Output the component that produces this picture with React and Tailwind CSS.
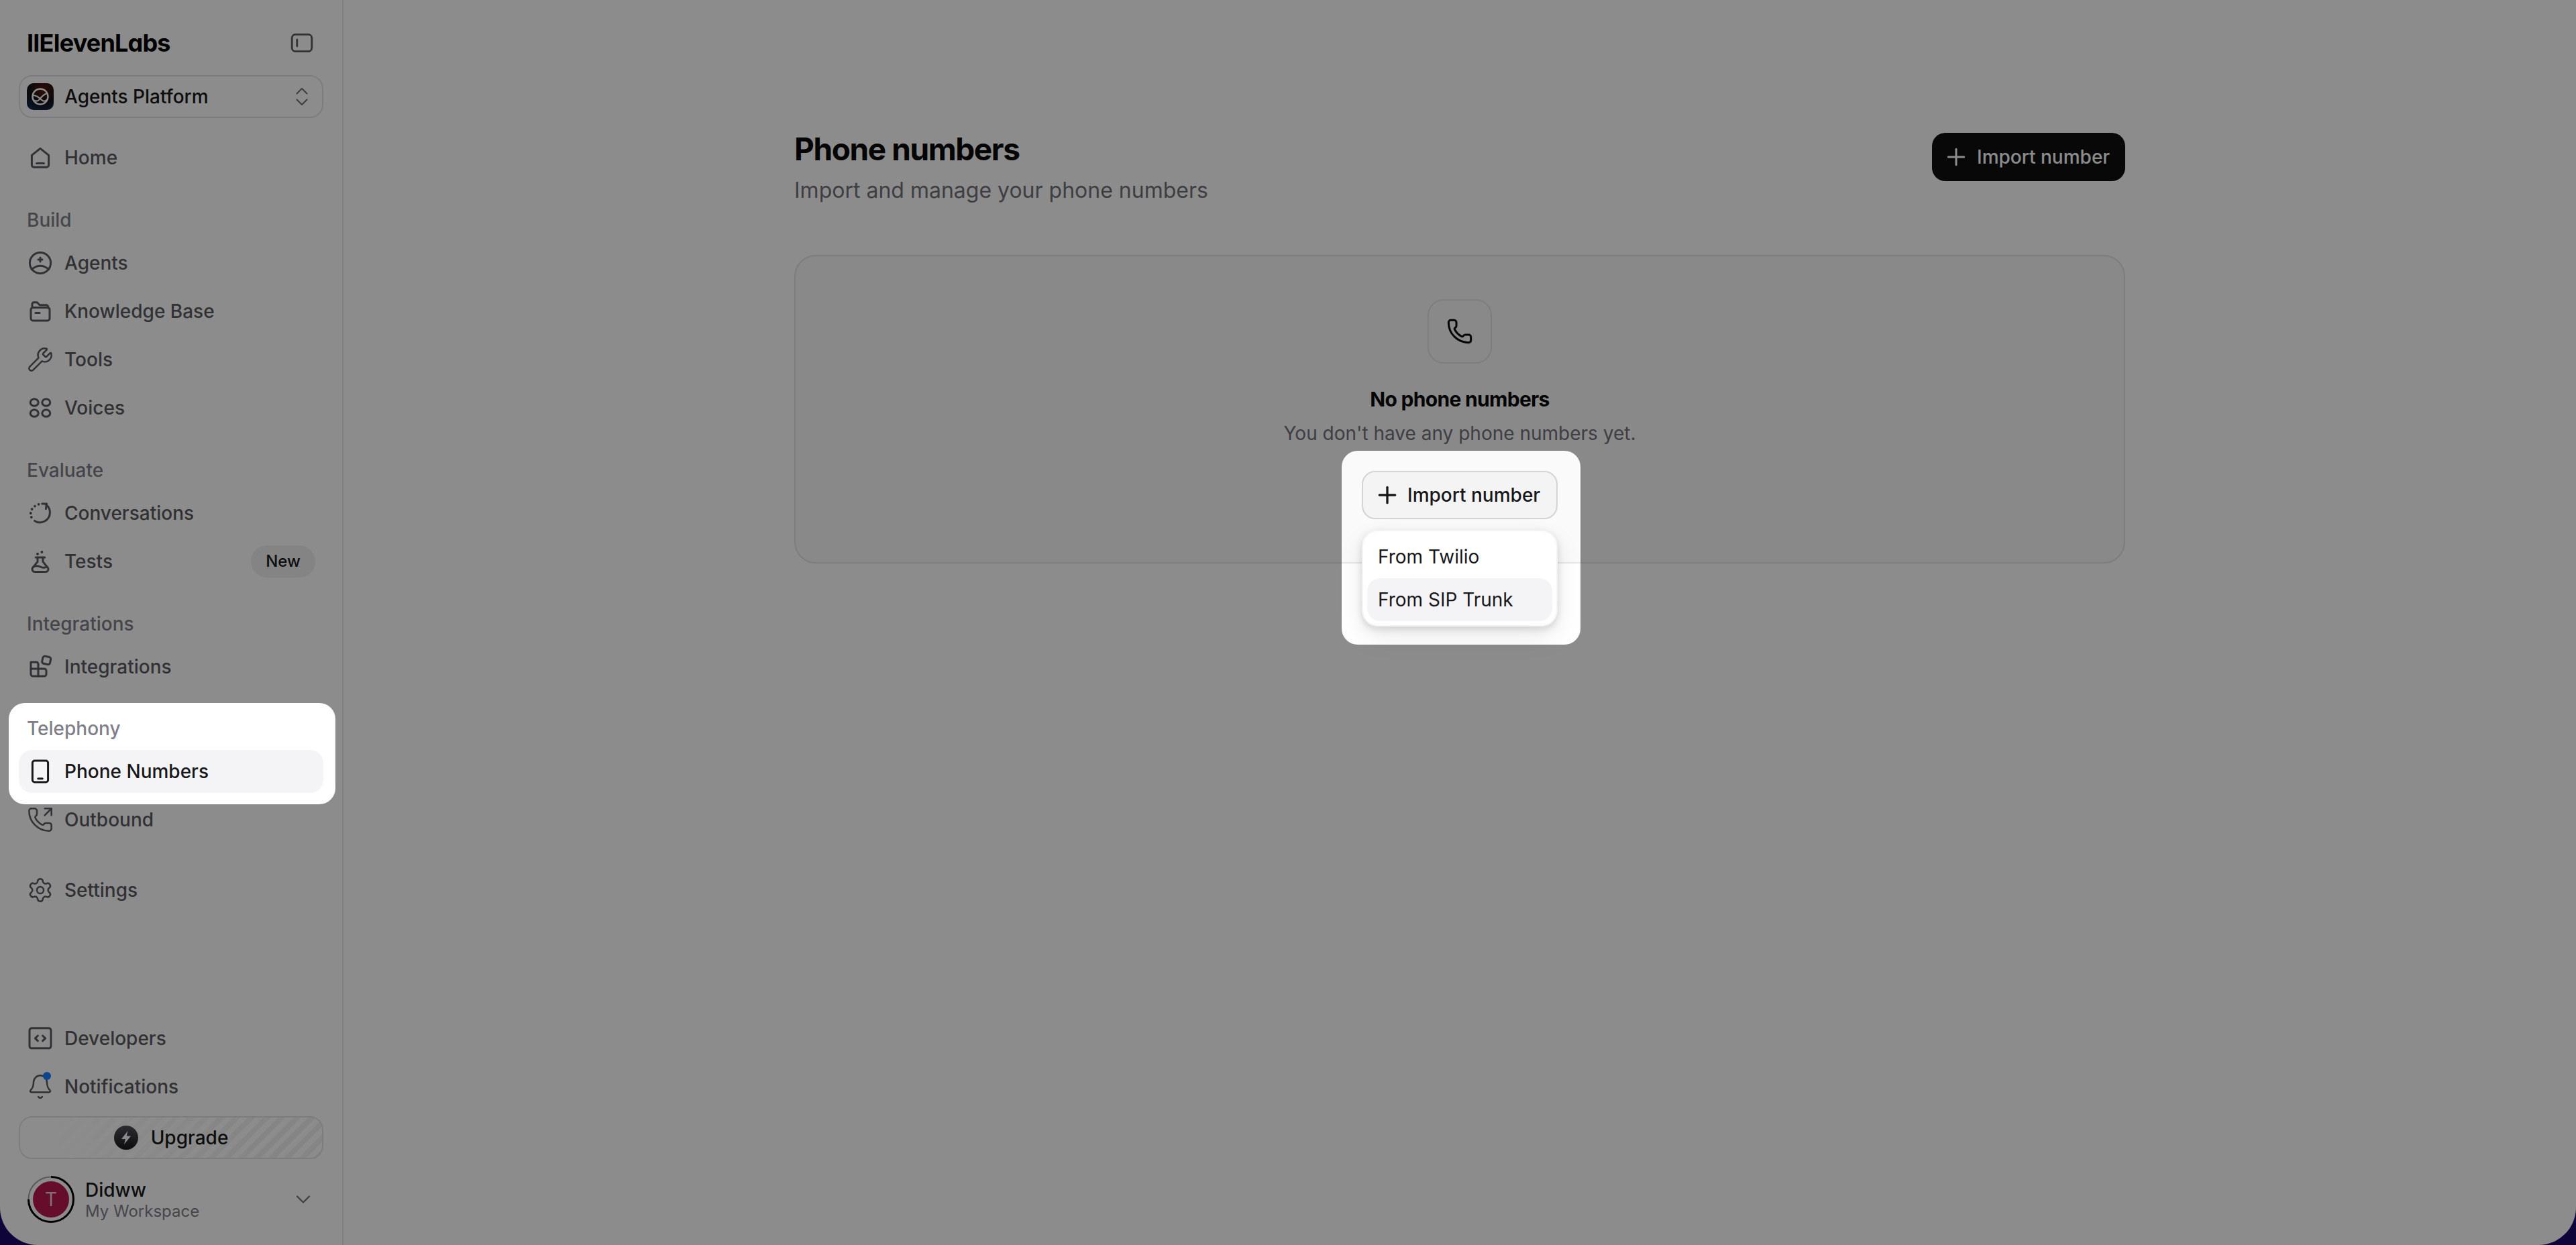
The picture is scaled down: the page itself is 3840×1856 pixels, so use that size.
import React from 'react';
import { Wrench, PhoneOutgoing, Settings, Bell, Plus, Phone, ChevronDown, ChevronsUpDown } from 'lucide-react';

const Svg = ({ children }) => (
  <svg viewBox="0 0 20 20" className="w-10 h-10 shrink-0" fill="none" stroke="currentColor" strokeWidth="1.5" strokeLinecap="round" strokeLinejoin="round">
    {children}
  </svg>
);

const HomeIcon = () => (
  <Svg>
    <path d="M3.7 8.2 10 3.2l6.3 5v7.3a1.6 1.6 0 0 1-1.6 1.6H5.3a1.6 1.6 0 0 1-1.6-1.6z" />
    <path d="M7.3 14.2h5.4" />
  </Svg>
);

const AgentsIcon = () => (
  <Svg>
    <circle cx="10" cy="10" r="7.8" />
    <path d="M3.6 14.8Q10 9.4 16.4 14.8" />
    <path d="M10 6v3M8.5 7.5h3" />
  </Svg>
);

const FolderIcon = () => (
  <Svg>
    <rect x="3" y="7.2" width="14" height="9.8" rx="1.6" />
    <path d="M4 7V4.6a1.2 1.2 0 0 1 1.2-1.2h2.4l2 2h5a1.2 1.2 0 0 1 1.2 1.2V7" />
    <path d="M6.5 11.2h3" />
  </Svg>
);

const VoicesIcon = () => (
  <Svg>
    <ellipse cx="5.6" cy="6" rx="3" ry="2.6" />
    <ellipse cx="14.4" cy="6" rx="3" ry="2.6" />
    <ellipse cx="5.6" cy="14" rx="3" ry="2.6" />
    <ellipse cx="14.4" cy="14" rx="3" ry="2.6" />
  </Svg>
);

const HistoryIcon = () => (
  <Svg>
    <path d="M14 3.4c2 1.3 3.2 3.6 3.2 6.1a7.4 7.4 0 0 1-11.4 6.2" />
    <path d="M11.4 3h3.4l-.6 3.8" />
    <path d="M3.4 13v0M2.9 10v0M3.8 7v0M6 4.8v0M8.8 3.4v0" strokeWidth="1.9" />
  </Svg>
);

const FlaskIcon = () => (
  <Svg>
    <path d="M6.6 7h6.8" />
    <path d="M8 7v3.2L4.4 14.6a2 2 0 0 0 1.6 3.2h8a2 2 0 0 0 1.6-3.2L12 10.2V7" />
    <path d="M5 14q2.5-1.2 5 0t5 0" />
    <path d="M8 4.4v0M11.2 3v0" strokeWidth="2" />
  </Svg>
);

const BlocksIcon = () => (
  <Svg>
    <path d="M3 6.5h4a1.5 1.5 0 0 1 1.5 1.5v3.5H13a1.5 1.5 0 0 1 1.5 1.5v2.5a1.5 1.5 0 0 1-1.5 1.5H4.5A1.5 1.5 0 0 1 3 15.5V8z" />
    <path d="M3 11.5h5.5M8.5 11.5V17" />
    <rect x="11.6" y="2.4" width="6" height="5.6" rx="1.4" transform="rotate(12 14.6 5.2)" />
  </Svg>
);

const MobileIcon = () => (
  <Svg>
    <rect x="4.2" y="2" width="11.6" height="16" rx="1.6" />
    <path d="M8.4 15.4h3.2" />
  </Svg>
);

const CodeIcon = () => (
  <Svg>
    <rect x="2" y="2.4" width="16" height="15" rx="1.6" />
    <path d="M8.2 8 6.2 9.9l2 1.9M11.8 8l2 1.9-2 1.9" />
  </Svg>
);

const lucide = (Icon) => () => <Icon size={40} strokeWidth={1.5} className="shrink-0" />;

const NavItem = ({ icon: Icon, label, active, badge, dot }) => (
  <div className={`relative h-16 mb-2 px-3 flex items-center gap-4 rounded-[20px] text-[28px] font-medium ${active ? 'bg-[#f4f4f6] text-[#18181b]' : 'text-[#5a5a63]'}`}>
    <Icon />
    <span>{label}</span>
    {dot && <span className="absolute left-[36px] top-[10px] w-3 h-3 rounded-full bg-[#147fff]" />}
    {badge && (
      <span className="ml-auto h-12 w-24 flex items-center justify-center rounded-full bg-[#f0f0f2] text-2xl text-[#18181b]">
        {badge}
      </span>
    )}
  </div>
);

const Label = ({ children }) => (
  <div className="h-10 mb-3 pl-3 flex items-center text-[28px] font-medium text-[#7f7f8a]">{children}</div>
);

const roundedRect = (x, y, w, h, r) =>
  `M${x + r} ${y}H${x + w - r}A${r} ${r} 0 0 1 ${x + w} ${y + r}V${y + h - r}A${r} ${r} 0 0 1 ${x + w - r} ${y + h}H${x + r}A${r} ${r} 0 0 1 ${x} ${y + h - r}V${y + r}A${r} ${r} 0 0 1 ${x + r} ${y}Z`;

// dimmed backdrop with the two spotlight holes
const Backdrop = () => (
  <svg className="absolute inset-0 w-full h-full pointer-events-none" viewBox="0 0 3840 1856">
    <path
      fillRule="evenodd"
      fill="#000"
      fillOpacity="0.45"
      d={`M0 0H3840V1856H0Z${roundedRect(13, 1048, 487, 151, 24)}${roundedRect(2000, 672, 356, 289, 24)}`}
    />
  </svg>
);

const Sidebar = () => (
  <aside className="w-[512px] shrink-0 h-full flex flex-col border-r-2 border-[#e8e8ea] pl-7 pr-7">
    <div className="h-[112px] pt-4 flex items-center justify-between pl-3">
      <span className="text-[36px] font-bold text-black tracking-[-0.8px] [font-feature-settings:'cv11']">IIElevenLabs</span>
      <svg viewBox="0 0 20 20" className="w-10 h-10 mr-3 text-[#5a5a63]" fill="none" stroke="currentColor" strokeWidth="1.4" strokeLinecap="round">
        <rect x="2.6" y="3.7" width="14.8" height="12.6" rx="2.6" />
        <path d="M6.4 7.6v4.8" />
      </svg>
    </div>

    <div className="h-16 flex items-center gap-[16px] pl-[10px] pr-3 rounded-[20px] border-2 border-[#e4e4e7] text-[28px] font-medium text-[#18181b]">
      <svg viewBox="0 0 40 40" className="w-10 h-10 shrink-0">
        <defs>
          <radialGradient id="chip" cx="0.6" cy="0.25" r="0.9">
            <stop offset="0" stopColor="#5a1a12" />
            <stop offset="0.55" stopColor="#111114" />
            <stop offset="1" stopColor="#14305a" />
          </radialGradient>
        </defs>
        <rect width="40" height="40" rx="10" fill="url(#chip)" />
        <circle cx="20" cy="20" r="11.5" fill="none" stroke="#fff" strokeWidth="2.4" />
        <path d="M9 18c6 0 10 4 13 7s6 2 9-1M31 15c-5 1-9 5-12 9s-6 3-9 1" fill="none" stroke="#fff" strokeWidth="2" />
      </svg>
      <span>Agents Platform</span>
      <ChevronsUpDown size={36} strokeWidth={1.4} className="ml-auto text-[#71717a]" />
    </div>

    <div className="mt-[27px]">
      <NavItem icon={HomeIcon} label="Home" />
    </div>

    <div className="mt-[33px]">
      <Label>Build</Label>
      <NavItem icon={AgentsIcon} label="Agents" />
      <NavItem icon={FolderIcon} label="Knowledge Base" />
      <NavItem icon={lucide(Wrench)} label="Tools" />
      <NavItem icon={VoicesIcon} label="Voices" />
    </div>

    <div className="mt-[33px]">
      <Label>Evaluate</Label>
      <NavItem icon={HistoryIcon} label="Conversations" />
      <NavItem icon={FlaskIcon} label="Tests" badge="New" />
    </div>

    <div className="mt-[33px]">
      <Label>Integrations</Label>
      <NavItem icon={BlocksIcon} label="Integrations" />
    </div>

    <div className="mt-[32px]">
      <Label>Telephony</Label>
      <NavItem icon={MobileIcon} label="Phone Numbers" active />
      <NavItem icon={lucide(PhoneOutgoing)} label="Outbound" />
    </div>

    <div className="mt-[33px]">
      <NavItem icon={lucide(Settings)} label="Settings" />
    </div>

    <div className="mt-auto">
      <NavItem icon={CodeIcon} label="Developers" />
      <NavItem icon={lucide(Bell)} label="Notifications" dot />
      <div className="mt-3 h-16 flex items-center justify-center gap-[19px] rounded-[20px] border-2 border-[#e4e4e7] text-[28px] font-medium text-[#18181b] bg-[linear-gradient(90deg,#fff_10%,transparent_85%),repeating-linear-gradient(135deg,#f2f2f2_0,#f2f2f2_8px,#fff_8px,#fff_16px)]">
        <svg viewBox="0 0 36 36" className="w-9 h-9">
          <defs>
            <linearGradient id="up" x1="0" y1="0" x2="0" y2="1">
              <stop offset="0" stopColor="#52525b" />
              <stop offset="1" stopColor="#18181b" />
            </linearGradient>
          </defs>
          <circle cx="18" cy="18" r="18" fill="url(#up)" />
          <path d="M20.5 8 11 20h6l-2 8 10-12.5h-6.2z" fill="#fff" />
        </svg>
        <span>Upgrade</span>
      </div>
      <div className="mt-[25px] mb-[33px] flex items-center pl-[13px]">
        <div className="relative w-[70px] h-[70px] shrink-0 flex items-center justify-center">
          <svg viewBox="0 0 70 70" className="absolute inset-0 w-full h-full">
            <circle cx="35" cy="35" r="33.5" fill="none" stroke="#a1a1aa" strokeWidth="2" />
            <path d="M35 1.5A33.5 33.5 0 1 1 1.5 35" fill="none" stroke="#000" strokeWidth="3" />
          </svg>
          <div className="w-[54px] h-[54px] rounded-full bg-[#b8184d] flex items-center justify-center text-[28px] text-[#ffffffcc]">T</div>
        </div>
        <div className="ml-4 mt-[3px] flex flex-col">
          <span className="text-[28px] leading-[32px] font-medium text-[#18181b]">Didww</span>
          <span className="text-2xl leading-[32px] text-[#7f7f8a]">My Workspace</span>
        </div>
        <ChevronDown size={36} strokeWidth={1.5} className="ml-auto mr-3 text-[#71717a]" />
      </div>
    </div>
  </aside>
);

const App = () => (
  <div className="relative w-screen h-screen overflow-hidden bg-[#1d0969] font-['Inter',sans-serif]">
    <div className="w-full h-full flex bg-white rounded-b-[56px] overflow-hidden">
      <Sidebar />
      <main className="flex-1 pt-[190px]">
        <div className="w-[1984px] mx-auto">
          <div className="flex items-start justify-between mb-[72px]">
            <div>
              <h1 className="text-[46px] leading-16 font-bold text-[#0a0a0a] tracking-[-1.4px]">Phone numbers</h1>
              <p className="mt-[6px] text-[32px] leading-12 text-[#71717a]">Import and manage your phone numbers</p>
            </div>
            <button className="mt-2 h-[72px] w-[288px] pl-4 flex items-center gap-[11px] rounded-[20px] bg-[#101010] text-white text-[28px] font-medium">
              <Plus size={40} strokeWidth={1.8} />
              Import number
            </button>
          </div>

          <div className="border-2 border-[#e4e4e7] rounded-[32px] bg-[#fafafa] py-16 flex flex-col items-center">
            <div className="w-24 h-24 flex items-center justify-center rounded-3xl border-2 border-[#e4e4e7] text-[#0a0a0a]">
              <Phone size={40} strokeWidth={1.8} />
            </div>
            <h2 className="mt-[33px] text-[30px] leading-10 font-bold text-[#0a0a0a] tracking-[-0.7px]">No phone numbers</h2>
            <p className="mt-[11px] text-[28px] leading-10 text-[#71717a]">You don't have any phone numbers yet.</p>
            <div className="relative mt-9">
              <button className="h-[72px] w-[292px] pl-4 flex items-center gap-[10px] rounded-[20px] border-2 border-[#d4d4d8] bg-[#f4f4f5] text-[#18181b] text-[28px] font-medium">
                <Plus size={40} strokeWidth={2} />
                Import number
              </button>
              <div className="absolute left-0 top-[88px] w-[292px] p-[6px] rounded-3xl border-2 border-[#f4f4f5] bg-white shadow-[0_4px_12px_rgba(0,0,0,0.15),0_16px_40px_rgba(0,0,0,0.08)] text-[28px] text-[#18181b]">
                <div className="h-16 pl-4 flex items-center rounded-[20px]">From Twilio</div>
                <div className="h-16 pl-4 flex items-center rounded-[20px] bg-[#f4f4f6]">From SIP Trunk</div>
              </div>
            </div>
          </div>
        </div>
      </main>
    </div>
    <Backdrop />
  </div>
);

export default App;
